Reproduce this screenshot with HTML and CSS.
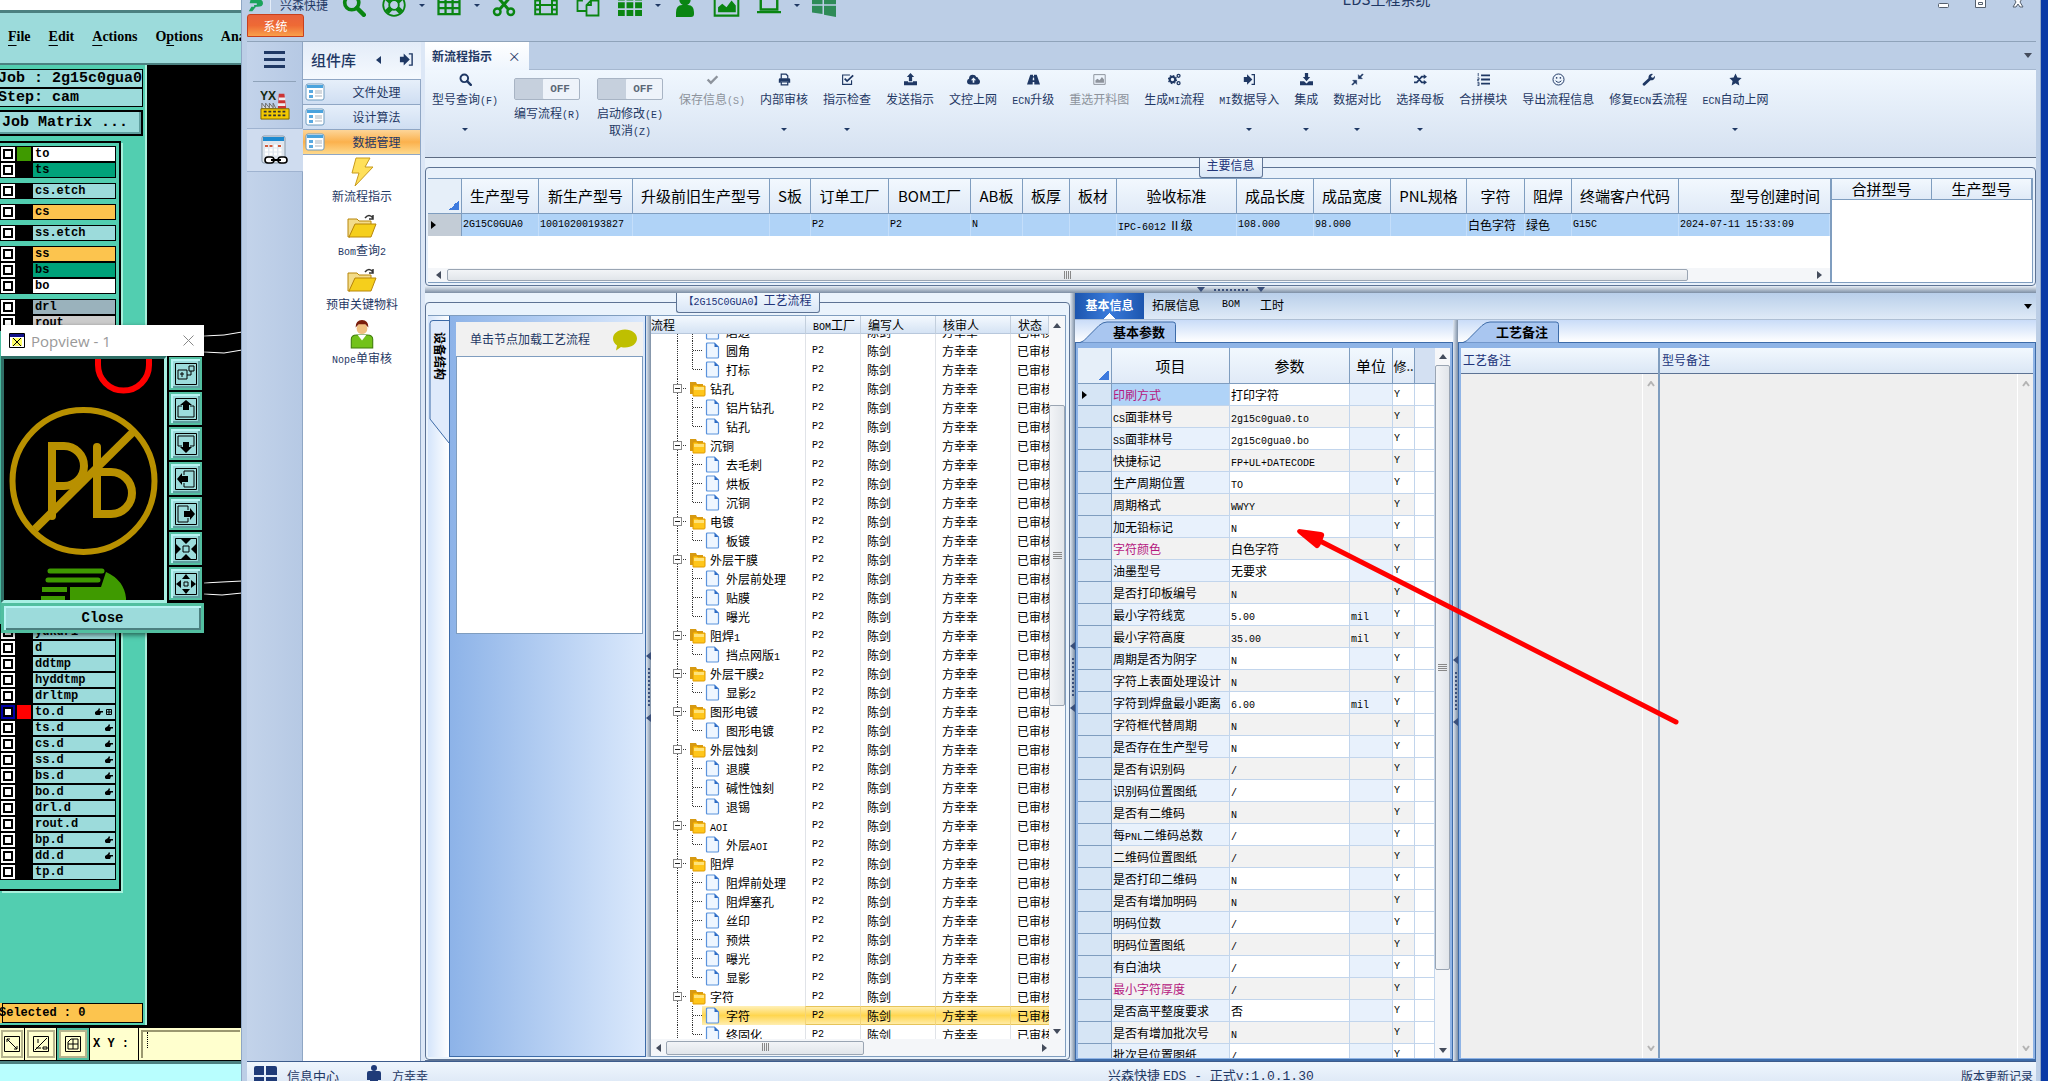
FILE: index.html
```html
<!DOCTYPE html>
<html lang="zh-CN">
<head>
<meta charset="utf-8">
<title>EDS工程系统</title>
<link rel="stylesheet" href="styles.css">
</head>
<body>
<svg class="defs" aria-hidden="true">
  <symbol id="i-search" viewBox="0 0 16 16"><circle cx="6.5" cy="6.5" r="4.7" fill="none" stroke="currentColor" stroke-width="2.4"/><path d="M10 10l4.5 4.5" stroke="currentColor" stroke-width="3" stroke-linecap="round"/></symbol>
  <symbol id="i-ring" viewBox="0 0 16 16"><circle cx="8" cy="8" r="7.2" fill="none" stroke="currentColor" stroke-width="1.2"/><circle cx="8" cy="8" r="3.2" fill="none" stroke="currentColor" stroke-width="1.2"/><path d="M3.200 3.200l2.800 2.800M10 10l2.800 2.800M12.800 3.200L10 6M6 10l-2.800 2.800" stroke="currentColor" stroke-width="3.500"/></symbol>
  <symbol id="i-table" viewBox="0 0 16 16"><path d="M1 2h14v12H1zM1 6h14M1 10h14M5.700 3v11M10.400 3v11" fill="none" stroke="currentColor" stroke-width="1.500"/><path d="M1 1.500h14v2H1z" fill="currentColor"/></symbol>
  <symbol id="i-cut" viewBox="0 0 16 16"><circle cx="3.500" cy="12.500" r="2.200" fill="none" stroke="currentColor" stroke-width="1.600"/><circle cx="12.500" cy="12.500" r="2.200" fill="none" stroke="currentColor" stroke-width="1.600"/><path d="M5 11l7-8M11 11L4 3" stroke="currentColor" stroke-width="2"/></symbol>
  <symbol id="i-film" viewBox="0 0 16 16"><path d="M.8 1.800h14.400v12.400H.8zM4 2v12M12 2v12M4 8h8M1 5h3M1 8h3M1 11h3M12 5h3M12 8h3M12 11h3" fill="none" stroke="currentColor" stroke-width="1.300"/></symbol>
  <symbol id="i-copy" viewBox="0 0 16 16"><path d="M7 12H1V5l3-3h6v3M4 2v3H1M10 5h5v10H7V8zM10 5v3H7" fill="none" stroke="currentColor" stroke-width="1.200"/></symbol>
  <symbol id="i-grid" viewBox="0 0 16 16"><path d="M0 1h4.500v4H0zM5.700 1h4.500v4H5.700zM11.400 1H16v4h-4.600zM0 6.200h4.500v4H0zM5.700 6.200h4.500v4H5.700zM11.400 6.200H16v4h-4.600zM0 11.400h4.500v4H0zM5.700 11.400h4.500v4H5.700zM11.400 11.400H16v4h-4.600z" fill="currentColor"/></symbol>
  <symbol id="i-user" viewBox="0 0 16 16"><circle cx="8" cy="4.500" r="3.800" fill="currentColor"/><path d="M2 16v-3q0-5 4-5h4q4 0 4 5v1q0 2-2 2z" fill="currentColor"/></symbol>
  <symbol id="i-pic" viewBox="0 0 16 16"><path d="M1 2h14v12H1z" fill="none" stroke="currentColor" stroke-width="1.200"/><path d="M3 12V9l2.500-2L8 9l3-4 2.500 3v4z" fill="currentColor"/></symbol>
  <symbol id="i-lap" viewBox="0 0 16 16"><path d="M2.500 3h11v8h-11z" fill="none" stroke="currentColor" stroke-width="1.600"/><path d="M0 12h16v1.500H0z" fill="currentColor"/></symbol>
  <symbol id="i-win" viewBox="0 0 16 16"><path d="M0 1h7v6.500H0zM8 1h8v6.500H8zM0 8.500h7V14l-7-1zM8 8.500h8V16l-8-1.500z" fill="currentColor"/></symbol>
  <symbol id="i-check" viewBox="0 0 16 16"><path d="M2 8l4 4 8-8" fill="none" stroke="currentColor" stroke-width="3"/></symbol>
  <symbol id="i-print" viewBox="0 0 16 16"><path d="M4 7V1.500h6l2 2V7M4 11h8v3.500H4z" fill="none" stroke="currentColor" stroke-width="1.500"/><path d="M1 12V8q0-1.500 1.500-1.500h11Q15 6.500 15 8v4h-2.500V10h-9v2z" fill="currentColor"/></symbol>
  <symbol id="i-tick" viewBox="0 0 16 16"><path d="M13 9v5H2V2.500h9" fill="none" stroke="currentColor" stroke-width="1.400"/><path d="M4.500 7l3 3L15 3" fill="none" stroke="currentColor" stroke-width="2.200"/></symbol>
  <symbol id="i-up" viewBox="0 0 16 16"><path d="M8 0l4.500 5H10v5H6V5H3.500zM0 10h5v1.500h6V10h5v5H0z" fill="currentColor"/></symbol>
  <symbol id="i-down" viewBox="0 0 16 16"><path d="M8 10L3.500 5H6V0h4v5h2.500zM0 10h5l3 3 3-3h5v5H0z" fill="currentColor"/></symbol>
  <symbol id="i-cloud" viewBox="0 0 16 16"><path fill-rule="evenodd" d="M4 14q-4 0-4-3.500Q0 8 2.500 7 2.500 2 7 2q3.500 0 4.500 3 2.500 0 2.500 2.500 2 .8 2 3 0 3.500-3.500 3.500zM8 5.500L4.800 9H7v3h2V9h2.200z" fill="currentColor"/></symbol>
  <symbol id="i-road" viewBox="0 0 16 16"><path fill-rule="evenodd" d="M4 2h3.400v2h1.200V2H12l4 12H9v-3H7v3H0zM7.300 5.500L7 9h2l-.3-3.500z" fill="currentColor"/></symbol>
  <symbol id="i-gears" viewBox="0 0 16 16"><circle cx="5.500" cy="8" r="3.400" fill="none" stroke="currentColor" stroke-width="2.600"/><circle cx="5.500" cy="8" r="5" fill="none" stroke="currentColor" stroke-width="1.400" stroke-dasharray="2 1.900"/><circle cx="13" cy="3.500" r="1.800" fill="none" stroke="currentColor" stroke-width="1.600"/><circle cx="13" cy="12.500" r="1.800" fill="none" stroke="currentColor" stroke-width="1.600"/></symbol>
  <symbol id="i-in" viewBox="0 0 16 16"><path d="M1 5h4V1.500L11.500 8 5 14.500V11H1z" fill="currentColor"/><path d="M10.500 2H14v12h-3.500" fill="none" stroke="currentColor" stroke-width="1.500"/></symbol>
  <symbol id="i-shrink" viewBox="0 0 16 16"><path d="M9 7V2l2 2 3-3 1 1-3 3 2 2zM7 9v5l-2-2-3 3-1-1 3-3-2-2z" fill="currentColor" stroke="currentColor" stroke-width=".6"/></symbol>
  <symbol id="i-mix" viewBox="0 0 16 16"><path d="M0 4.500h3.500L9.500 11.500H13M0 11.500h3.500L9.500 4.500H13" fill="none" stroke="currentColor" stroke-width="2"/><path d="M12 1.500l4 3-4 3zM12 8.500l4 3-4 3z" fill="currentColor"/></symbol>
  <symbol id="i-list" viewBox="0 0 16 16"><path d="M5 3h11M5 8h11M5 13h11" stroke="currentColor" stroke-width="2.200"/><path d="M1.500 0v4M.5 6h2v2h-2v1.500h2M.5 11.500h2v4h-2M.5 13.500h2" fill="none" stroke="currentColor" stroke-width="1"/></symbol>
  <symbol id="i-smile" viewBox="0 0 16 16"><circle cx="8" cy="8" r="6.800" fill="none" stroke="currentColor" stroke-width="1.200"/><circle cx="5.700" cy="6" r="1" fill="currentColor"/><circle cx="10.300" cy="6" r="1" fill="currentColor"/><path d="M4.500 9.500q3.500 4 7 0" fill="none" stroke="currentColor" stroke-width="1.200"/></symbol>
  <symbol id="i-wrench" viewBox="0 0 16 16"><path d="M1 13l7-6.500Q7.500 2 12 1l1.500.3L11 4l1 1.500 1.700.3L16 3.500q.3 5.500-5.500 5.500L3.500 15.500Q0 16 1 13z" fill="currentColor"/></symbol>
  <symbol id="i-star" viewBox="0 0 16 16"><path d="M8 .5l2.300 5 5.200.6-3.900 3.700 1.100 5.500L8 12.500l-4.700 2.800 1.100-5.500L.5 6.100l5.200-.6z" fill="currentColor"/></symbol>
  <symbol id="i-panel" viewBox="0 0 20 18"><rect x="1" y="1" width="18" height="16" rx="2" fill="#fff" stroke="#6f9cc0"/><path d="M2 2h16v3H2z" fill="#4aa3dd"/><path d="M4 7h4v3H4zM4 12h4v3H4z" fill="#59a9e0"/><path d="M10 8h7M10 10h7M10 13h7" stroke="#a9b3bd"/></symbol>
  <symbol id="i-folder" viewBox="0 0 30 24"><path d="M1 5h9l2 2h12v4H8L3 23H1z" fill="#f3dc8a" stroke="#b8860b"/><path d="M8 10h21l-5 13H2z" fill="#f5cf1c" stroke="#b8860b"/><path d="M18 4q4-5 8 0M26 1v4h-4" fill="none" stroke="#333" stroke-width="1.500"/></symbol>
  <symbol id="i-doc" viewBox="0 0 14 17"><path d="M1 2Q1 1 2 1h7l4 4v10q0 1-1 1H2q-1 0-1-1z" fill="#eef6ff" stroke="#5b93dc" stroke-width="1.200"/><path d="M9 1l4 4H9z" fill="#2d6bc4"/></symbol>
  <symbol id="i-fold" viewBox="0 0 17 16"><path d="M1 13V1h6l1 2h6v10z" fill="#d79a12"/><path d="M4 4h4l1 1h7v9q0 1-1 1H4z" fill="#ffc61a" stroke="#e09a00"/><path d="M5 6h10v3H5z" fill="#ffe37a"/></symbol>
  <symbol id="i-hand" viewBox="0 0 8 8"><path d="M0 4l3-2 1-2 1 1-.5 2H8v1.500H6L5 7H1L0 6z" fill="#000"/></symbol>
  <symbol id="i-snap" viewBox="0 0 8 8"><path d="M1.500 1.500h5v5h-5zM4 1.500v5M1.500 4h5" fill="none" stroke="#000"/></symbol>
</svg>

<main class="desktop">
  <section class="cam" aria-label="CAM">
    <header class="cam-title"></header>
    <nav class="cam-menu"><a href="#"><u>F</u>ile</a><a href="#"><u>E</u>dit</a><a href="#"><u>A</u>ctions</a><a href="#">O<u>p</u>tions</a><a href="#">Ana</a></nav>
    <div class="cam-body">
      <div class="cam-side">
        <div class="cam-job">Job : 2g15c0gua0</div>
        <div class="cam-job">Step: cam</div>
        <button class="cam-matrix">Job Matrix ...</button>
        <div class="cam-list" id="layers"></div>
        <div class="cam-sel">Selected : 0</div>
      </div>
      <svg class="cam-view" viewBox="0 0 95 961" fill="none" stroke="#fff"><path d="M57 271l20-1 18-3M57 287l20 1 18-3M57 518l18-1 20-1M57 529l18 1 20-2"/></svg>
    </div>
    <footer class="cam-foot">
      <button class="cam-tool"><svg viewBox="0 0 16 16"><path d="M.5.5h15v15H.5zM3 3l10 10M3 6V3h3M10 13h3v-3" fill="none" stroke="#000"/></svg></button>
      <button class="cam-tool"><svg viewBox="0 0 16 16"><path d="M.5.5h15v15H.5zM2 14L14 2M3 12h5M5 3v4M10 11h4v2h-4z" fill="none" stroke="#000"/></svg></button>
      <button class="cam-tool on"><svg viewBox="0 0 16 16"><path d="M.5.5h15v15H.5zM3 6l3-3h7v10H3zM8 3v10M3 8h10" fill="none" stroke="#000"/></svg></button>
      <label class="cam-xy" for="xy">X Y :</label>
      <div class="cam-field"><i></i><input class="cam-in" id="xy"></div>
    </footer>
    <div class="cam-base"></div>
  </section>

  <section class="pop" aria-label="Popview">
    <header class="pop-title"><svg viewBox="0 0 16 15"><path d="M.5.5h15v14H.5z" fill="#fff" stroke="#000"/><path d="M1 1h14v3H1z" fill="#118"/><path d="M3 5h10v8H3z" fill="#ff6"/><path d="M4 5l8 8M12 5l-8 8" stroke="#000"/></svg><span>Popview - 1</span><button aria-label="close"><svg viewBox="0 0 11 11"><path d="M.5.5l10 10M10.500.5l-10 10" stroke="#888"/></svg></button></header>
    <div class="pop-main">
      <svg class="pop-view" viewBox="0 0 160 241" fill="none">
        <path d="M94 0v6a25 25 0 0 0 51 0V0" stroke="#f00" stroke-width="6"/>
        <g stroke="#b89000"><circle cx="79.500" cy="122" r="71" stroke-width="6"/><path d="M31 170L129 73" stroke-width="8"/><path d="M48 157V87h12a20 20 0 0 1 0 40H50" stroke-width="8" stroke-linecap="round"/><path d="M93 88v67h14a20 20 0 0 0 0-42H95" stroke-width="8" stroke-linecap="round"/></g>
        <path d="M46 212h52M44 221h50" stroke="#3f9a00" stroke-width="5" stroke-linecap="round"/><path d="M38 228h25v5H38zM37 237h24v4H37zM66 228h31l5-15q18 8 20 26v2H66z" fill="#3f9a00"/>
      </svg>
      <div class="pop-btns">
        <button><svg viewBox="0 0 22 22"><path d="M.5.5h21v21H.5zM3 7h9v9H3zM14 3h5v5h-5zM12 12h4V8M5 11h4M7 9v5" fill="none" stroke="#000"/></svg></button>
        <button><svg viewBox="0 0 22 22"><path d="M.5.5h21v21H.5zM7 8H3v11h16V8h-4" fill="none" stroke="#000"/><path d="M11 2l6 5h-3v5H8V7H5z"/></svg></button>
        <button><svg viewBox="0 0 22 22"><path d="M.5.5h21v21H.5zM7 13H3V3h16v10h-4" fill="none" stroke="#000"/><path d="M11 20l6-6h-3V9H8v5H5z"/></svg></button>
        <button><svg viewBox="0 0 22 22"><path d="M.5.5h21v21H.5zM9 7V3h10v16H9v-4" fill="none" stroke="#000"/><path d="M2 11l5-6v3h6v6H7v3z"/></svg></button>
        <button><svg viewBox="0 0 22 22"><path d="M.5.5h21v21H.5zM13 7V3H3v16h10v-4" fill="none" stroke="#000"/><path d="M20 11l-5-6v3H9v6h6v3z"/></svg></button>
        <button><svg viewBox="0 0 22 22"><path d="M.5.5h21v21H.5zM8 8h6v6H8z" fill="none" stroke="#000"/><path d="M11 6L6 1h10zM11 16l5 5H6zM6 11L1 6v10zM16 11l5-5v10z"/></svg></button>
        <button><svg viewBox="0 0 22 22"><path d="M.5.5h21v21H.5zM9 9h4v4H9z" fill="none" stroke="#000"/><path d="M11 1l4 5H7zM11 21l4-5H7zM1 11l5-4v8zM21 11l-5-4v8z"/></svg></button>
      </div>
    </div>
    <button class="pop-close">Close</button>
  </section>

  <section class="eds" aria-label="EDS工程系统">
    <header class="top">
      <div class="qat">
        <svg class="logo" viewBox="0 0 18 16"><path d="M4 2h10q4 0 4 4t-6 4h-2l-4 5H2l3-5h3V8h3V6H3z" fill="#1aa35c"/></svg>
        <span class="brand">兴森快捷</span>
        <button class="q q-search"><svg><use href="#i-search"/></svg></button>
        <button class="q q-menu"><svg><use href="#i-ring"/></svg><i class="car"></i></button>
        <button class="q q-menu"><svg><use href="#i-table"/></svg><i class="car"></i></button>
        <button class="q"><svg><use href="#i-cut"/></svg></button>
        <button class="q"><svg><use href="#i-film"/></svg></button>
        <button class="q"><svg><use href="#i-copy"/></svg></button>
        <button class="q q-menu"><svg><use href="#i-grid"/></svg><i class="car"></i></button>
        <button class="q"><svg><use href="#i-user"/></svg></button>
        <button class="q"><svg class="wide"><use href="#i-pic"/></svg></button>
        <button class="q q-menu"><svg><use href="#i-lap"/></svg><i class="car"></i></button>
        <button class="q q-win"><svg><use href="#i-win"/></svg></button>
      </div>
      <h1>EDS工程系统</h1>
      <div class="wc"><svg viewBox="0 0 96 12" fill="#fff" stroke="#55606e"><rect x="3.500" y="7.500" width="10" height="4" rx="1"/><path d="M40.500 1.500h10v10h-10zM43.500 6.500h4v2h-4z"/><path d="M78 1h3l2 3 2-3h3l-3 5 3 5h-3l-2-3-2 3h-3l3-5z"/></svg></div>
      <button class="sys">系统</button>
    </header>

    <div class="mid">
      <nav class="rail">
        <button class="burger" aria-label="menu"><i></i><i></i><i></i></button>
        <button class="rb"><svg viewBox="0 0 32 32"><text x="0" y="11" class="yx">YX</text><path d="M20 4h6l2 16h-9z" fill="#c33"/><path d="M20 8h7v3h-7zM19 14h8v3h-8z" fill="#eee"/><path d="M2 20v-6l4 5v-5l4 5v-5l4 5v-5l3 6z" fill="#ddd" stroke="#666"/><path d="M1 20h30v11H1z" fill="#f2c800" stroke="#7a6500"/><path d="M4 23h25M4 27h25" stroke="#333" stroke-width="2" stroke-dasharray="3 2"/></svg></button>
        <button class="rb sel"><svg viewBox="0 0 28 30"><rect x="1" y="1" width="23" height="27" rx="2" fill="#dfe6ee" stroke="#8799aa"/><path d="M2 2h21v4H2z" fill="#1c8ad0"/><path d="M4 11h17M4 15h17M4 19h17" stroke="#fff" stroke-width="3" stroke-dasharray="3 1.500"/><path d="M4 11h9M17 11h4" stroke="#d25b3c" stroke-width="2" stroke-dasharray="3 1.500"/><rect x="4" y="22" width="9" height="6" rx="3" fill="#fff" stroke="#000" stroke-width="1.600"/><rect x="17" y="22" width="9" height="6" rx="3" fill="#fff" stroke="#000" stroke-width="1.600"/><path d="M10 25h10" stroke="#000" stroke-width="2"/></svg></button>
      </nav>
      <aside class="lib">
        <header><span>组件库</span><i class="tri-l"></i><svg><use href="#i-in"/></svg></header>
        <button class="acc"><svg><use href="#i-panel"/></svg><span>文件处理</span></button>
        <button class="acc"><svg><use href="#i-panel"/></svg><span>设计算法</span></button>
        <button class="acc on"><svg><use href="#i-panel"/></svg><span>数据管理</span></button>
        <div class="items">
          <button><svg viewBox="0 0 22 30"><path d="M5 1h14l-5 9h8L4 29l4-13H1z" fill="#ffe05a" stroke="#c89b1e"/></svg>新流程指示</button>
          <button><svg><use href="#i-folder"/></svg><span><span class="m">Bom</span>查询<span class="m">2</span></span></button>
          <button><svg><use href="#i-folder"/></svg>预审关键物料</button>
          <button><svg viewBox="0 0 22 28"><path d="M1 27v-8q0-4 5-4h10q5 0 5 4v8z" fill="#72c21a" stroke="#3f7d0a"/><path d="M7 15l4 5 4-5z" fill="#fff"/><circle cx="11" cy="9" r="5" fill="#f0c080"/><path d="M5 8q0-7 6-7t6 7l-3-3H8z" fill="#7a1e0c"/></svg><span><span class="m">Nope</span>单审核</span></button>
        </div>
      </aside>

      <div class="work">
        <div class="tabs"><button class="tab">新流程指示 <span>×</span></button><i class="tri-d"></i></div>
        <div class="ribbon" id="ribbon"></div>

        <fieldset class="box info">
          <legend>主要信息</legend>
          <div class="grids">
            <div class="gridwrap">
              <table class="grid">
                <colgroup><col class="w34"><col class="w77"><col class="w94"><col class="w137"><col class="w41"><col class="w78"><col class="w82"><col class="w52"><col class="w47"><col class="w47"><col class="w120"><col class="w77"><col class="w77"><col class="w76"><col class="w58"><col class="w47"><col class="w107"><col></colgroup>
                <thead><tr><th class="corner"></th><th>生产型号</th><th>新生产型号</th><th>升级前旧生产型号</th><th>S板</th><th>订单工厂</th><th>BOM工厂</th><th>AB板</th><th>板厚</th><th>板材</th><th>验收标准</th><th>成品长度</th><th>成品宽度</th><th>PNL规格</th><th>字符</th><th>阻焊</th><th>终端客户代码</th><th class="right">型号创建时间</th></tr></thead>
                <tbody><tr><td class="cur"><i class="tri-r"></i></td><td class="m">2G15C0GUA0</td><td class="m">10010200193827</td><td></td><td></td><td class="m">P2</td><td class="m">P2</td><td class="m">N</td><td></td><td></td><td><span class="m">IPC-6012</span> Ⅱ级</td><td class="m">108.000</td><td class="m">98.000</td><td></td><td>白色字符</td><td>绿色</td><td class="m">G15C</td><td class="m">2024-07-11 15:33:09</td></tr></tbody>
              </table>
              <div class="hs"><i class="tri-l"></i><div class="track"><div class="thumb big"></div></div><i class="tri-r"></i></div>
            </div>
            <table class="grid side"><thead><tr><th>合拼型号</th><th>生产型号</th></tr></thead></table>
          </div>
        </fieldset>
        <div class="hsplit"><i class="tri-d"></i><b></b><i class="tri-d"></i></div>

        <div class="lower">
          <fieldset class="box flow">
            <legend><span class="m">【2G15C0GUA0】</span>工艺流程</legend>
            <div class="flowrow">
              <div class="vstrip"><button class="vtab"><svg viewBox="0 0 20 124"><path d="M20 .5H4q-3 0-3 3V99l19 24" fill="#dfeafb" stroke="#3d6ba8"/></svg><span>设备结构</span></button></div>
              <div class="device">
                <div class="tip"><span>单击节点加载工艺流程</span><svg viewBox="0 0 24 24"><path d="M12 2c7 0 12 4 12 9s-5 9-12 9q-2 0-4-.5L3 23l1-5Q0 15 0 11c0-5 5-9 12-9z" fill="#bfbf00"/></svg></div>
                <div class="blank"></div>
              </div>
              <div class="vsplit"><i class="tri-l"></i><b></b><i class="tri-l"></i></div>
              <div class="treewrap">
                <div class="treetop">
                  <div class="scroll" id="treebox">
                    <table class="tree">
                      <colgroup><col class="w155"><col class="w55"><col class="w75"><col class="w75"><col></colgroup>
                      <thead><tr><th>流程</th><th><span class="m">BOM</span>工厂</th><th>编写人</th><th>核审人</th><th>状态</th></tr></thead>
                      <tbody id="tree"></tbody>
                    </table>
                  </div>
                  <div class="vs"><i class="tri-u"></i><div class="vtrack"><div class="vthumb t1"></div></div><i class="tri-d"></i></div>
                </div>
                <div class="hs"><i class="tri-l"></i><div class="track"><div class="thumb mid-t"></div></div><i class="tri-r"></i></div>
              </div>
            </div>
          </fieldset>
          <div class="vsplit"><i class="tri-l"></i><b></b><i class="tri-l"></i></div>

          <div class="detail">
            <div class="dtabs"><button class="on">基本信息</button><button>拓展信息</button><button class="m">BOM</button><button>工时</button><i class="tri-d"></i></div>
            <div class="drow">
              <div class="sub params">
                <div class="stabs"><button class="stab"><svg viewBox="0 0 96 21"><path d="M0 21Q4 20 7 16L19 4q4-3.500 8-3.500h66q2.500 0 2.500 2.500v18" fill="#a9c6f0" stroke="#3d6ba8"/></svg><span>基本参数</span></button></div>
                <div class="subin">
                  <div class="scroll">
                    <table class="ptab">
                      <colgroup><col class="w34"><col class="w118"><col class="w120"><col class="w43"><col class="w22"><col></colgroup>
                      <thead><tr><th class="corner"></th><th>项目</th><th>参数</th><th>单位</th><th class="cut">修..</th><th class="end"></th></tr></thead>
                      <tbody id="params"></tbody>
                    </table>
                  </div>
                  <div class="vs"><i class="tri-u"></i><div class="vtrack"><div class="vthumb t2"></div></div><i class="tri-d"></i></div>
                </div>
              </div>
              <div class="vsplit"><i class="tri-l"></i><b></b><i class="tri-l"></i></div>
              <div class="sub notes">
                <div class="stabs"><button class="stab"><svg viewBox="0 0 96 21"><path d="M0 21Q4 20 7 16L19 4q4-3.500 8-3.500h66q2.500 0 2.500 2.500v18" fill="#a9c6f0" stroke="#3d6ba8"/></svg><span>工艺备注</span></button></div>
                <div class="subin">
                  <div class="note n1"><h2>工艺备注</h2><div class="pane"><div class="nbar"><svg viewBox="0 0 8 6"><path d="M1 5l3-4 3 4" /></svg><svg viewBox="0 0 8 6"><path d="M1 1l3 4 3-4"/></svg></div></div></div>
                  <div class="note"><h2>型号备注</h2><div class="pane"><div class="nbar"><svg viewBox="0 0 8 6"><path d="M1 5l3-4 3 4"/></svg><svg viewBox="0 0 8 6"><path d="M1 1l3 4 3-4"/></svg></div></div></div>
                </div>
              </div>
            </div>
          </div>
        </div>
      </div>
    </div>

    <footer class="status">
      <svg class="s-win" viewBox="0 0 23 20"><path d="M0 2q0-2 2-2h8v9H0zM12 0h9q2 0 2 2v7H12zM0 11h10v9H2q-2 0-2-2zM12 11h11v7q0 2-2 2h-9z" fill="#1f3b78"/></svg>
      <span class="s-info">信息中心</span>
      <svg class="s-man" viewBox="0 0 14 22"><circle cx="7" cy="3" r="3" fill="#1f3b78"/><path d="M0 8q0-2 2-2h10q2 0 2 2v7h-3v7H3v-7H0z" fill="#1f3b78"/></svg>
      <span>方幸幸</span>
      <span class="s-ver">兴森快捷 <span>EDS - </span>正式<span>v:1.0.1.30</span></span>
      <a href="#">版本更新记录</a>
    </footer>
  </section>

  <svg class="arrow" viewBox="0 0 384 200"><path d="M380 194L22 12" stroke="#f00" stroke-width="5" stroke-linecap="round"/><path d="M3 1q-4 2 0 5l17 14q3 1 5-4l3-8q1-3-3-4z" fill="#f00"/></svg>
</main>
<script src="app.js"></script>
</body>
</html>
```
FILE: styles.css
```css
* { box-sizing: border-box; }
html, body { height: 100%; }
body { margin: 0; overflow: hidden; background: #0a3aa6; color: #000; font: 12px/14px "Noto Sans CJK SC", sans-serif; }
button { border: 0; padding: 0; margin: 0; background: none; font: inherit; color: inherit; }
table { border-collapse: separate; border-spacing: 0; table-layout: fixed; width: 100%; }
th, td { padding: 0; white-space: nowrap; overflow: hidden; text-align: left; font-weight: 400; }
svg { display: block; }
.defs { position: absolute; width: 0; height: 0; }
.m { font-family: "Liberation Mono", "Noto Sans CJK SC", monospace; font-size: 10px; }
span.m { line-height: 0; }
.desktop { position: relative; height: 100%; overflow: hidden; }

/* Column widths of the data grids */
.w22 { width: 22px; } .w34 { width: 34px; } .w41 { width: 41px; } .w43 { width: 43px; } .w47 { width: 47px; }
.w52 { width: 52px; } .w55 { width: 55px; } .w58 { width: 58px; } .w75 { width: 75px; } .w76 { width: 76px; }
.w77 { width: 77px; } .w78 { width: 78px; } .w82 { width: 82px; } .w94 { width: 94px; } .w107 { width: 107px; }
.w118 { width: 118px; } .w120 { width: 120px; } .w137 { width: 137px; } .w155 { width: 155px; }

.tri-l, .tri-r, .tri-u, .tri-d, .car { display: block; flex: none; width: 0; height: 0; border: 4px solid transparent; }
.tri-l { border-right: 5px solid #444c5c; border-left: 0; }
.tri-r { border-left: 5px solid #444c5c; border-right: 0; }
.tri-u { border-bottom: 5px solid #444c5c; border-top: 0; }
.tri-d { border-top: 5px solid #444c5c; border-bottom: 0; }
.car { border-width: 3px 3px 0; border-top-color: #1f3864; }

/* CAM window */
.cam { position: absolute; left: 0; top: 0; bottom: 0; width: 242px; display: flex; flex-direction: column; background: #000; font: bold 12px/14px "Liberation Mono", monospace; }
.cam-title { height: 13px; background: #fff; border-bottom: 3px solid #4b8080; }
.cam-menu { height: 52px; display: flex; align-items: center; gap: 18px; padding: 0 0 2px 8px; background: #9cdbdb; border-bottom: 2px solid #4b8080; overflow: hidden; }
.cam-menu a { color: #000; text-decoration: none; font: bold 14px/20px "Liberation Serif", serif; }
.cam-menu u { text-underline-offset: 4px; }
.cam-body { flex: 1; min-height: 0; display: flex; }
.cam-side { width: 147px; display: flex; flex-direction: column; background: #52ceb0; border-right: 2px solid #a8f0dc; padding-top: 4px; }
.cam-job { height: 19px; margin-right: 2px; border: 1px solid #000; border-left: 0; background: #9cdbdb; font-size: 15px; line-height: 18px; text-indent: -2px; white-space: nowrap; }
.cam-matrix { height: 26px; margin: 3px 2px 5px 0; padding-left: 2px; border: 2px solid #000; border-left: 0; box-shadow: inset -2px -2px #5f9f9f; background: #9cdbdb; text-align: left; font-size: 15px; }
.cam-list { width: 121px; padding: 3px 0 9px; border: 1px solid #000; border-width: 2px 2px 2px 0; box-shadow: 2px 2px #a8f0dc; }
.cam-row { height: 16px; width: 116px; display: flex; align-items: center; gap: 2px; background: #000; padding: 1px; }
.cam-row.gap { margin-top: 5px; }
.cam-row.hole { margin-top: 293px; }
.cam-row input { appearance: none; margin: 0; width: 14px; height: 14px; border: 2px solid #fff; background: #fff; box-shadow: inset 0 0 0 2px #000; }
.cam-row input:checked { border-color: #0000a8; }
.cam-row i { width: 14px; height: 14px; }
.cam-row label { flex: 1; height: 14px; padding-left: 2px; display: flex; align-items: center; background: #9cdbdb; }
.cam-row label span { flex: 1; }
.cam-row svg { width: 8px; height: 8px; margin-right: 2px; }
.bg-green { background: #3f9a00; } .bg-red { background: #f00; }
.cam-row .l-white { background: #fff; } .cam-row .l-teal { background: #00a27a; } .cam-row .l-org { background: #fcc44e; } .cam-row .l-gray { background: #9ab2bc; } .cam-row .l-lg { background: #ccc; }
.cam-sel { margin: auto 0 0; height: 24px; padding-top: 3px; line-height: 14px; text-indent: -1px; border: 2px solid #52ceb0; border-left: 0; outline: 1px solid #000; outline-offset: -3px; background: #fcc44e; }
.cam-view { flex: 1; min-width: 0; height: 961px; }
.cam-foot { height: 36px; padding: 3px 0 1px; display: flex; background: #000; gap: 1px; }
.cam-tool { width: 32px; margin-left: -1px; border: 2px solid #ffffce; outline: 1px solid #000; box-shadow: inset 0 0 0 2px #b6b48e; background: #ffffce; display: grid; place-items: center; }
.cam-tool:first-child { width: 26px; }
.cam-tool.on { border-color: #52bfa0; }
.cam-tool svg { width: 16px; height: 16px; }
.cam-xy { width: 48px; background: #ffffce; line-height: 32px; padding-left: 3px; }
.cam-field { flex: 1; min-width: 0; display: flex; border: 2px solid #ffffce; box-shadow: inset 2px 2px #9b9870; background: #ffffce; padding: 2px 0 0 6px; }
.cam-field i { height: 16px; border-left: 1px dotted #000; }
.cam-in { flex: 1; min-width: 0; border: 0; background: transparent; }
.cam-base { height: 20px; border-top: 3px solid #4b8080; background: #b8fefe; }

/* Popview window */
.pop { position: absolute; left: 1px; top: 325px; width: 203px; display: flex; flex-direction: column; background: #fff; box-shadow: 2px 2px 5px #0008; }
.pop-title { height: 31px; display: flex; align-items: center; padding: 0 10px 0 8px; gap: 6px; color: #999; font: 15px/20px "Open Sans", sans-serif; }
.pop-title svg { width: 16px; height: 15px; }
.pop-title button { margin-left: auto; }
.pop-title button svg { width: 11px; height: 11px; }
.pop-main { display: flex; background: #000; height: 247px; }
.pop-view { width: 166px; height: 247px; border: 3px solid #9cdbdb; border-color: #2f6f66 #a8f0e4 #a8f0e4 #2f6f66; }
.pop-btns { display: flex; flex-direction: column; gap: 2px; padding: 1px 0 0 2px; }
.pop-btns button { width: 33px; height: 33px; border: 2px solid #52bfa0; box-shadow: inset 2px 2px #b8f4f4, inset -2px -2px #5f9f9f; background: #9cdbdb; display: grid; place-items: center; }
.pop-btns svg { width: 22px; height: 22px; }
.pop-close { height: 30px; border: 3px solid #52bfa0; box-shadow: inset 2px 2px #b8f4f4, inset -2px -2px #4b8080; background: #9cdbdb; font: bold 14px/20px "Liberation Mono", monospace; }

/* EDS window, taller than the visible desktop */
.eds { position: absolute; left: 241px; right: 7px; top: -11px; bottom: -9px; display: flex; flex-direction: column; padding: 0 4px 0 5px; background: #bccee6; border: solid #8fa6c4; border-width: 0 1px; color: #1f3864; }
.top { height: 53px; position: relative; border-bottom: 1px solid #8fa3ba; }
.qat { display: flex; align-items: center; height: 26px; padding-top: 6px; color: #0a8512; }
.logo { width: 16px; height: 16px; margin-right: 7px; }
.brand { padding: 0 14px 0 9px; border-left: 1px solid #e4edf8; color: #1f3864; }
.q { display: flex; align-items: center; height: 24px; margin-right: 18px; }
.q svg { width: 24px; height: 24px; }
.q .wide { width: 27px; height: 27px; margin: 0 -1px 0 -2px; }
.q-search { margin-right: 16px; }
.q-menu { gap: 13px; margin-right: 12px; }
.q-win { color: #2e8b57; }
.top h1 { position: absolute; top: 0; left: 0; right: 0; margin: 0; padding-left: 490px; text-align: center; font-size: 15px; line-height: 20px; font-weight: 400; }
.wc { position: absolute; right: 5px; top: 7px; }
.wc svg { width: 96px; height: 12px; }
.sys { position: absolute; left: 0; bottom: 4px; width: 57px; height: 23px; border: 1px solid #c8401c; border-radius: 3px 3px 0 0; background: linear-gradient(#e8623c, #ee6a35 50%, #f9a04a); color: #fff; }
.mid { flex: 1; min-height: 0; display: flex; }
.rail { width: 56px; display: flex; flex-direction: column; align-items: center; border-right: 1px solid #8fa6c4; background: linear-gradient(90deg, #c3d3ea, #b6c9e4); }
.burger { width: 43px; height: 40px; display: flex; flex-direction: column; align-items: center; gap: 4px; padding-top: 9px; border-bottom: 1px solid #8fa3ba; }
.burger i { width: 21px; height: 3px; background: #1f3864; }
.rb { width: 56px; height: 47px; display: grid; place-items: center; border-bottom: 1px solid #9fb3d0; }
.rb svg { width: 30px; height: 30px; }
.rb.sel { height: 43px; background: #cfdcef; }
.yx { font: bold 13px "Liberation Sans", sans-serif; fill: #142a14; }
.lib { width: 122px; border-right: 4px solid #dce7f6; background: #fff; box-shadow: inset -1px 0 #8fa6c4; }
.lib header { height: 37px; display: flex; align-items: center; padding: 0 0 2px 8px; background: linear-gradient(#e3ecf8, #f5f9fe); font-size: 15px; font-weight: 500; }
.lib header .tri-l { margin: 0 18px 0 20px; border-right-color: #1f3864; }
.lib header svg { width: 15px; height: 15px; }
.acc { width: 100%; height: 25px; display: flex; align-items: center; border: 1px solid #8fa6c4; border-left: 0; border-bottom: 0; background: linear-gradient(#e6effa, #cfdef2); }
.acc svg { width: 20px; height: 18px; margin: 0 0 0 2px; }
.acc span { flex: 1; text-align: center; padding-left: 8px; }
.acc.on { background: linear-gradient(#fdd598, #fbb14d 50%, #fed98c); border-bottom: 1px solid #8fa6c4; height: 26px; }
.items { display: flex; flex-direction: column; }
.items button { height: 54px; display: flex; flex-direction: column; align-items: center; }
.items svg { width: 30px; height: 30px; margin: 2px 0; }

.work { flex: 1; min-width: 0; display: flex; flex-direction: column; background: #e8f1fb; }
.tabs { height: 28px; display: flex; align-items: center; justify-content: space-between; padding-right: 4px; background: #bccee6; border-bottom: 1px solid #a6b8d0; }
.tab { align-self: stretch; margin-bottom: -1px; width: 104px; background: linear-gradient(#fff, #eef5fd); font-weight: 700; text-align: left; padding-left: 7px; white-space: nowrap; }
.tab span { font-weight: 400; font-size: 13px; padding-left: 13px; }
.ribbon { height: 88px; display: flex; gap: 15px; padding: 3px 0 0 7px; overflow: hidden; background: linear-gradient(#f0f7fe, #d5e1f1); border-bottom: 1px solid #5d6b82; }
.rbtn { display: flex; flex-direction: column; align-items: center; white-space: nowrap; }
.rbtn svg { width: 13px; height: 13px; margin: 0 0 6px; }
.rbtn:disabled { color: #8d939c; }
.rbtn .car { margin-top: 22px; }
.toggle { width: 68px; padding-top: 5px; display: flex; flex-direction: column; align-items: center; line-height: 17px; white-space: nowrap; }
.sw { display: flex; width: 66px; height: 22px; margin-bottom: 4px; border: 1px solid #a8b4c4; border-radius: 2px; background: #eef3fa; align-items: center; justify-content: center; font: bold 11px/20px "Liberation Mono", monospace; color: #5c6877; padding-left: 26px; box-shadow: inset 28px 0 #c6d0dd; }

.box { margin: 0; padding: 0; border: 0; min-width: 0; position: relative; }
.box::before { content: ""; position: absolute; inset: 9px 0 0; border: 1px solid #5d7394; border-radius: 4px; pointer-events: none; }
.box legend { position: absolute; z-index: 2; top: 0; left: 50%; transform: translateX(-50%); height: 20px; padding: 0 7px; line-height: 14px; white-space: nowrap; border: 1px solid #5d7394; border-top: 0; border-radius: 0 0 3px 3px; background: linear-gradient(#f2f8fe, #d9e6f6); color: #22357a; }
.info { height: 128px; padding: 20px 3px 3px; }
.grids { display: flex; height: 105px; }
.gridwrap { flex: 1; min-width: 0; display: flex; flex-direction: column; justify-content: space-between; background: #fff; border: 1px solid #7f9dbf; border-left: 0; }
.grid th { height: 35px; text-align: center; font-size: 15px; line-height: 20px; color: #000; background: linear-gradient(#f2f8fe, #e0eaf7); border-right: 1px solid #7f9dbf; border-bottom: 1px solid #7f9dbf; }
.grid .right { text-align: right; padding-right: 10px; border-right: 0; }
.grid td { height: 22px; padding-left: 1px; color: #000; background: #b0d3f7; border-right: 1px solid #c4defa; }
.grid td.cur { background: #c3ccd6; padding-left: 3px; border-right: 1px solid #7f9dbf; }
.grid .corner, .ptab .corner { background: linear-gradient(135deg, transparent 50%, #3d7ade 50%) calc(100% - 2px) calc(100% - 3px) / 10px 10px no-repeat, #e6eff9; }
.side { width: 202px; background: #fff; border: 1px solid #7f9dbf; display: block; }
.side thead, .side tr { display: flex; }
.side thead { width: 200px; }
.side tr, .side th { flex: 1; }
.side th { height: 21px; }
.hs { height: 14px; display: flex; align-items: center; padding: 0 8px; background: #f4f6f9; gap: 6px; }
.track { flex: 1; height: 12px; }
.thumb { height: 12px; border: 1px solid #9aa5b3; border-radius: 2px; background: linear-gradient(#f2f4f7, #e1e5ea); }
.thumb::after { content: ""; display: block; width: 7px; height: 8px; margin: 1px auto; background: repeating-linear-gradient(90deg, #888 0 1px, transparent 1px 2px); }
.big { width: 91%; }
.mid-t { width: 198px; height: 14px; }
.hsplit { height: 7px; display: flex; align-items: center; justify-content: center; gap: 9px; background: linear-gradient(#e6edf5, #7d8fa5); }
.hsplit b { width: 34px; border-top: 2px dotted #3a4f7a; }
.hsplit .tri-d { border-top-color: #3a4f7a; }
.lower { flex: 1; min-height: 0; display: flex; }
.flow { flex: none; width: 645px; padding: 22px 4px 3px 3px; background: #eaf3fc; border-bottom: 1px solid #5d7394; }
.flowrow { height: 100%; display: flex; border-top: 1px solid #7f9dbf; }
.vstrip { width: 21px; padding: 4px 0 0 1px; background: linear-gradient(90deg, #d5e5fb, #fff); }
.vtab { position: relative; width: 20px; height: 124px; }
.vtab svg { position: absolute; inset: 0; width: 20px; height: 124px; }
.vtab span { position: absolute; left: 4px; top: 12px; writing-mode: vertical-rl; text-orientation: sideways; font-weight: 700; font-size: 12px; color: #000; }
.device { width: 197px; padding: 6px 2px 0 6px; border: 1px solid #3d6ba8; border-top: 0; background: linear-gradient(90deg, #8db3e8, #dbe9fc); }
.tip { height: 34px; display: flex; align-items: center; justify-content: space-between; padding: 0 6px 0 14px; background: #f1f1f1; }
.tip svg { width: 24px; height: 25px; }
.blank { height: 278px; background: #fff; border: 1px solid #7f9dbf; }
.vsplit { flex: none; width: 5px; display: flex; flex-direction: column; align-items: center; justify-content: center; gap: 8px; background: linear-gradient(90deg, #e0e8f2, #7d8fa5); }
.vsplit b { height: 38px; border-left: 2px dotted #3a4f7a; }
.vsplit .tri-l { border-right-color: #3a4f7a; }
.treewrap { flex: 1; min-width: 0; display: flex; flex-direction: column; background: #fff; border: 1px solid #7f9dbf; border-width: 0 1px 1px 0; color: #000; }
.treewrap .hs { height: 17px; padding: 0 18px 0 5px; gap: 5px; }
.treewrap .track { height: 14px; }
.treetop { flex: 1; min-height: 0; display: flex; }
.scroll { flex: 1; min-width: 0; overflow: hidden; }
.tree { margin-bottom: 20px; }
.tree th { position: sticky; top: 0; z-index: 1; height: 18px; padding-left: 7px; line-height: 16px; background: linear-gradient(#f4f9fe, #d5e3f4); border-right: 1px solid #c3cfdd; border-bottom: 1px solid #b8c8dc; }
.tree th:first-child { padding-left: 0; }
.tree td { height: 19px; line-height: 17px; padding-left: 6px; border-right: 1px solid #e0e3e8; }
.tree td:first-child { padding: 0; }
.tree td:last-child { border: 0; }
.node { --v: repeating-linear-gradient(#333 0 1px, transparent 1px 2px); --h: repeating-linear-gradient(90deg, #333 0 1px, transparent 1px 2px); height: 19px; display: flex; align-items: center; padding-left: 22px; background: var(--v) 26px 0 / 1px 19px no-repeat, var(--h) 30px 9px / 6px 1px no-repeat; }
.node b { flex: none; width: 9px; height: 9px; margin-right: 7px; border: 1px solid #8a8a8a; background: linear-gradient(#222, #222) center / 5px 1px no-repeat, #fff; }
.node svg { flex: none; width: 17px; height: 16px; margin-right: 4px; }
.leaf { padding-left: 54px; background: var(--v) 26px 0 / 1px 19px no-repeat, var(--v) 41px 0 / 1px 19px no-repeat, var(--h) 42px 9px / 9px 1px no-repeat; }
.leaf.last { background: var(--v) 26px 0 / 1px 19px no-repeat, var(--v) 41px 0 / 1px 10px no-repeat, var(--h) 42px 9px / 9px 1px no-repeat; }
.leaf svg { width: 15px; height: 17px; margin-right: 6px; }
.tree .selrow td { background: linear-gradient(#fff0b8, #ffd64f 50%, #ffeeb0); border-right-color: #f3d478; box-shadow: inset 0 1px #e6c45a, inset 0 -1px #e6c45a; }
.tree .selrow td:first-child { background: linear-gradient(#fff0b8, #ffd64f 50%, #ffeeb0) 51px 0 no-repeat; box-shadow: none; }
.vs { width: 16px; display: flex; flex-direction: column; align-items: center; padding: 7px 0 5px; background: #f6f7f9; }
.vtrack { flex: 1; width: 100%; }
.vthumb { display: grid; place-items: center; border: 1px solid #9aa5b3; border-radius: 2px; background: linear-gradient(90deg, #f2f4f7, #e1e5ea); }
.vthumb::after { content: ""; width: 9px; height: 7px; background: repeating-linear-gradient(#888 0 1px, transparent 1px 2px); }
.t1 { height: 43%; margin-top: 77px; }
.t2 { height: 605px; margin-top: 6px; }

.detail { flex: 1; min-width: 0; display: flex; flex-direction: column; }
.dtabs { height: 27px; display: flex; align-items: stretch; padding-right: 4px; background: linear-gradient(#b9cfea, #dfeaf7); color: #000; border-bottom: 1px solid #aebfd4; }
.dtabs button { padding: 0 12px 3px 8px; }
.dtabs button + button + button { padding: 0 10px 3px; }
.dtabs .on { width: 69px; padding: 0 0 3px; color: #fff; font-weight: 700; background: conic-gradient(from 135deg at 50% 0, #fff 90deg, transparent 0) center bottom / 12px 6px no-repeat, linear-gradient(90deg, #1c55ae, #3a7bdb 50%, #1c55ae); }
.dtabs .tri-d { align-self: center; margin-left: auto; border-top-color: #000; }
.drow { flex: 1; min-height: 0; display: flex; }
.sub { display: flex; flex-direction: column; min-width: 0; }
.params { width: 378px; }
.notes { flex: 1; }
.stabs { height: 22px; padding: 1px 5px 0; background: linear-gradient(#c9dcf8, #fff); }
.stab { position: relative; z-index: 1; width: 96px; height: 22px; color: #000; font-weight: 700; font-size: 13px; line-height: 20px; padding-left: 22px; }
.stab svg { position: absolute; inset: 0; width: 96px; height: 22px; }
.stab span { position: relative; }
.subin { flex: 1; min-height: 0; display: flex; border: solid #3d6ba8; border-width: 1px 1px 2px; padding: 5px 2px 1px; background: #8fb4e6; }
.subin .scroll { background: #fff; }
.params .vs { width: 15px; padding: 6px 0 5px; }
.ptab { color: #000; }
.ptab th { height: 36px; text-align: center; font-size: 15px; line-height: 20px; background: linear-gradient(#f2f8fe, #e0eaf7); border-right: 1px solid #7f9dbf; border-bottom: 1px solid #7f9dbf; }
.ptab .cut { font-size: 13px; }
.ptab .end { background: #d3e0f2; border-right: 0; }
.ptab td { height: 22px; padding-left: 1px; line-height: 20px; border-right: 1px solid #c2d5ec; border-bottom: 1px solid #c2d5ec; background: #fff; }
.ptab td:nth-child(2), .ptab td:nth-child(4) { background: #e8f1fc; }
.ptab tr:nth-child(even) td { background: #f2f2f2; }
.ptab tbody tr td:last-child { background: #fff; }
.ptab tbody tr td:first-child { background: #d6e5f5; border-color: #7f9dbf; padding-left: 4px; }
.ptab .tri-r, .grid .tri-r { border-left-color: #000; }
.ptab tr.key td:nth-child(2) { color: #b5177e; }
.ptab tr:first-child td:nth-child(2) { background: #b0d3f7; }
.note { flex: 1; min-width: 0; display: flex; flex-direction: column; background: #efefef; border-left: 1px solid #7f9dbf; }
.n1 { flex: none; width: 198px; border-left: 0; border-right: 1px solid #7f9dbf; }
.note h2 { margin: 0; height: 26px; padding-left: 2px; font-size: 12px; line-height: 24px; font-weight: 400; color: #22357a; background: linear-gradient(#f2f8fe, #dbe7f5); border-bottom: 1px solid #5d7394; }
.pane { flex: 1; display: flex; justify-content: flex-end; }
.nbar { width: 16px; display: flex; flex-direction: column; justify-content: space-between; align-items: center; padding: 7px 0; border-left: 1px solid #fff; }
.nbar svg { width: 8px; height: 6px; fill: none; stroke: #b4b4b4; stroke-width: 2; }

.status { height: 29px; display: flex; align-items: center; position: relative; padding: 0 3px 0 7px; background: linear-gradient(#eff6fd, #d8e4f4); border-top: 1px solid #3d5c8c; }
.s-win { width: 23px; height: 20px; margin-right: 10px; }
.s-info { font-size: 13px; margin-right: 28px; }
.s-man { width: 14px; height: 22px; margin-right: 11px; }
.s-ver { position: absolute; left: 861px; font-size: 13px; white-space: pre; }
.s-ver span { font-family: "Liberation Mono", monospace; }
.status a { margin-left: auto; color: inherit; text-decoration: none; }

.arrow { position: absolute; left: 1296px; top: 528px; width: 384px; height: 200px; fill: none; pointer-events: none; }
```
FILE: app.js
```js
// Latin runs are set in the narrow monospace face beside the Chinese text.
const mix = t => t.replace(/[A-Za-z0-9()\/+.\-]+/g, s => `<span class="m">${s}</span>`);
const icon = id => `<svg><use href="#${id}"/></svg>`;
const fill = (id, html) => { document.getElementById(id).innerHTML = html; };

// name | label colour | swatch | spacing | marks
const layers = [
  ['to', 'l-white', 'bg-green'], ['ts', 'l-teal'], ['cs.etch', '', '', 'gap'], ['cs', 'l-org', '', 'gap'],
  ['ss.etch', '', '', 'gap'], ['ss', 'l-org', '', 'gap'], ['bs', 'l-teal'], ['bo', 'l-white'],
  ['drl', 'l-gray', '', 'gap'], ['rout', 'l-lg'], ['yukuri', '', '', 'hole'], ['d'], ['ddtmp'], ['hyddtmp'],
  ['drltmp'], ['to.d', '', 'bg-red', '', 2], ['ts.d', '', '', '', 1], ['cs.d', '', '', '', 1],
  ['ss.d', '', '', '', 1], ['bs.d', '', '', '', 1], ['bo.d', '', '', '', 1], ['drl.d'], ['rout.d'],
  ['bp.d', '', '', '', 1], ['dd.d', '', '', '', 1], ['tp.d']
];
fill('layers', layers.map(([n, bg = '', sw = '', gap = '', mark], i) =>
  `<div class="cam-row ${gap}"><input type="checkbox" id="ly${i}"${n === 'to.d' ? ' checked' : ''}><i class="${sw}"></i><label class="${bg}" for="ly${i}"><span>${n}</span>${mark ? icon('i-hand') : ''}${mark === 2 ? icon('i-snap') : ''}</label></div>`).join(''));

// label, icon, has menu, disabled
const cmds = [
  ['型号查询(F)', 'i-search', 1], { t: ['编写流程(R)'] }, { t: ['启动修改(E)', '取消(Z)'] },
  ['保存信息(S)', 'i-check', 0, 1], ['内部审核', 'i-print', 1], ['指示检查', 'i-tick', 1], ['发送指示', 'i-up'],
  ['文控上网', 'i-cloud'], ['ECN升级', 'i-road'], ['重选开料图', 'i-pic', 0, 1], ['生成MI流程', 'i-gears'],
  ['MI数据导入', 'i-in', 1], ['集成', 'i-down', 1], ['数据对比', 'i-shrink', 1], ['选择母板', 'i-mix', 1],
  ['合拼模块', 'i-list'], ['导出流程信息', 'i-smile'], ['修复ECN丢流程', 'i-wrench'], ['ECN自动上网', 'i-star', 1]
];
fill('ribbon', cmds.map(c => c.t
  ? `<div class="toggle"><button class="sw">OFF</button>${c.t.map(s => `<span>${mix(s)}</span>`).join('')}</div>`
  : `<button class="rbtn"${c[3] ? ' disabled' : ''}>${icon(c[1])}<span>${mix(c[0])}</span>${c[2] ? '<i class="car"></i>' : ''}</button>`).join(''));

// Process groups and their steps; the first group starts above the visible part.
const flow = [
  ['', '磨边 圆角 打标'], ['钻孔', '铝片钻孔 钻孔'], ['沉铜', '去毛刺 烘板 沉铜'], ['电镀', '板镀'],
  ['外层干膜', '外层前处理 贴膜 曝光'], ['阻焊1', '挡点网版1'], ['外层干膜2', '显影2'], ['图形电镀', '图形电镀'],
  ['外层蚀刻', '退膜 碱性蚀刻 退锡'], ['AOI', '外层AOI'], ['阻焊', '阻焊前处理 阻焊塞孔 丝印 预烘 曝光 显影'],
  ['字符', '字符 终固化']
];
const line = (node, sel) => `<tr${sel ? ' class="selrow"' : ''}><td>${node}</td><td class="m">P2</td><td>陈剑</td><td>方幸幸</td><td>已审核</td></tr>`;
fill('tree', flow.map(([g, kids]) =>
  (g ? line(`<div class="node"><b></b>${icon('i-fold')}<span>${mix(g)}</span></div>`) : '') +
  kids.split(' ').map((k, i, a) => line(`<div class="node leaf${i === a.length - 1 ? ' last' : ''}">${icon('i-doc')}<span>${mix(k)}</span></div>`, g === '字符' && i === 0)).join('')).join(''));
document.getElementById('treebox').scrollTop = 12;

// name | value | unit, a leading * marks a key field
const params = `*印刷方式|打印字符
CS面菲林号|2g15c0gua0.to
SS面菲林号|2g15c0gua0.bo
快捷标记|FP+UL+DATECODE
生产周期位置|TO
周期格式|WWYY
加无铅标记|N
*字符颜色|白色字符
油墨型号|无要求
是否打印板编号|N
最小字符线宽|5.00|mil
最小字符高度|35.00|mil
周期是否为阴字|N
字符上表面处理设计|N
字符到焊盘最小距离|6.00|mil
字符框代替周期|N
是否存在生产型号|N
是否有识别码|/
识别码位置图纸|/
是否有二维码|N
每PNL二维码总数|/
二维码位置图纸|/
是否打印二维码|N
是否有增加明码|N
明码位数|/
明码位置图纸|/
有白油块|/
*最小字符厚度|/
是否高平整度要求|否
是否有增加批次号|N
批次号位置图纸|/`.split('\n');
fill('params', params.map((p, i) => {
  const [n, v, u = ''] = p.split('|');
  return `<tr${n[0] === '*' ? ' class="key"' : ''}><td>${i ? '' : '<i class="tri-r"></i>'}</td><td>${mix(n.replace('*', ''))}</td><td>${mix(v)}</td><td>${mix(u)}</td><td class="m">Y</td><td></td></tr>`;
}).join(''));
```
